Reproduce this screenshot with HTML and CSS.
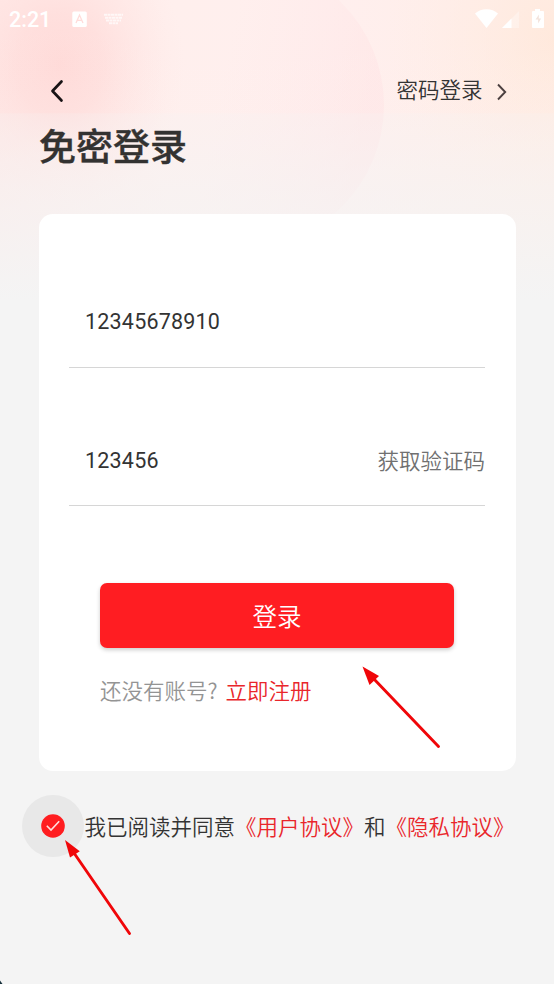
FILE: index.html
```html
<!DOCTYPE html>
<html lang="zh-CN">
<head>
<meta charset="utf-8">
<title>免密登录</title>
<link rel="stylesheet" href="styles.css">
</head>
<body>
<div class="screen">
  <svg class="backdrop" viewBox="0 0 554 300" aria-hidden="true">
    <defs>
      <linearGradient id="base" x1="0" y1="0" x2="1" y2="0">
        <stop offset="0" stop-color="#ffe8e6"/><stop offset=".3" stop-color="#ffefed"/><stop offset=".6" stop-color="#ffefee"/><stop offset="1" stop-color="#ffede6"/>
      </linearGradient>
      <radialGradient id="rose"><stop offset="0" stop-color="#ffdad8"/><stop offset=".35" stop-color="#ffdcda" stop-opacity=".75"/><stop offset="1" stop-color="#ffe8e6" stop-opacity="0"/></radialGradient>
      <radialGradient id="peach"><stop offset="0" stop-color="#ffe9dc"/><stop offset="1" stop-color="#ffeee8" stop-opacity="0"/></radialGradient>
      <linearGradient id="bubble" x1="0" y1="0" x2="1" y2=".2"><stop offset=".5" stop-color="#ffe8e8" stop-opacity="0"/><stop offset="1" stop-color="#ffe3e4" stop-opacity=".5"/></linearGradient>
      <linearGradient id="fade" x1="0" y1="0" x2="0" y2="1"><stop offset="0" stop-color="#f4f4f4" stop-opacity="0"/><stop offset=".375" stop-color="#f4f4f4" stop-opacity=".05"/><stop offset=".38" stop-color="#f4f4f4" stop-opacity=".25"/><stop offset=".65" stop-color="#f4f4f4" stop-opacity=".6"/><stop offset="1" stop-color="#f4f4f4"/></linearGradient>
    </defs>
    <rect width="554" height="300" fill="url(#base)"/>
    <ellipse cx="60" cy="65" rx="125" ry="145" fill="url(#rose)"/>
    <circle cx="554" cy="40" r="170" fill="url(#peach)"/>
    <circle cx="240" cy="105" r="144" fill="url(#bubble)"/>
    <rect width="554" height="300" fill="url(#fade)"/>
  </svg>

  <div class="status">
    <span class="clock">2:21</span>
    <svg class="status-input" width="54" height="18" viewBox="0 0 54 18">
      <rect x="1.300" y="1.500" width="14.500" height="15.500" rx="1.500" fill="#fff"/>
      <path d="M5 13 8.500 5l3.500 8M6.500 10.300h4" fill="none" stroke="#ffdcda" stroke-width="1.300"/>
      <path d="M33 4.800h19M34 7.700h17M35 10.600h15M38 13.300h9" stroke="#fff" stroke-opacity=".7" stroke-width="2" stroke-dasharray="3 .5"/>
    </svg>
    <svg class="status-signal" width="70" height="20" viewBox="0 0 70 20">
      <path d="M0 4.500C6-1.200 17-1.200 23 4.500L11.500 19z" fill="#fff"/>
      <path d="M27 19 44 2v17z" fill="#fff" fill-opacity=".3"/><path d="M27 19 36.500 9.500V19z" fill="#fff"/>
      <path d="M57 3q0-1 1-1h2V0h5v2h3q1 0 1 1v15q0 1-1 1H58q-1 0-1-1z" fill="#fff"/><path d="M64 5.500 60.500 10.500h2.600v4l3-5h-2.400z" fill="#f3e3dc"/>
    </svg>
  </div>

  <header class="bar">
    <svg class="back" width="16" height="24" viewBox="0 0 16 24"><path d="M12.500 2.500 3.500 12l9 9.500" fill="none" stroke="#181315" stroke-width="2.700" stroke-linecap="round" stroke-linejoin="round"/></svg>
    <a class="switch">密码登录<svg width="12" height="18" viewBox="0 0 12 18"><path d="m2 1.500 7.200 7.500L2 16.500" fill="none" stroke="#4b4040" stroke-width="1.900"/></svg></a>
  </header>

  <h1 class="title">免密登录</h1>

  <main class="card">
    <div class="field phone"><span>12345678910</span></div>
    <div class="field code"><span>123456</span><a class="send">获取验证码</a></div>
    <button class="submit">登录</button>
    <p class="register"><span>还没有账号?</span><a>立即注册</a></p>
  </main>

  <div class="agreement">
    <span class="check"><svg width="24" height="24" viewBox="0 0 24 24"><circle cx="12" cy="12" r="11.800" fill="#ff1d20"/><path d="m5.800 11.700 4.200 4.300 8.200-8.800" fill="none" stroke="#ffe0df" stroke-width="1.600"/></svg></span>
    <p>我已阅读并同意<a>《用户协议》</a>和<a>《隐私协议》</a></p>
  </div>

  <svg class="arrows" viewBox="0 0 554 984" aria-hidden="true">
    <g stroke="#f00609" stroke-width="2.900" stroke-linecap="round"><path d="M438.500 746.500 373 678"/><path d="M129.500 933.500 74 853"/></g>
    <g fill="#f00609"><path d="m362.500 666.500 16.500 9.500-9.500 9z"/><path d="m65 840 14.800 11.200-9.800 6.300z"/></g>
    <path d="M0 980.500 2.500 984H0z" fill="#17303b"/>
  </svg>
</div>
</body>
</html>
```
FILE: styles.css
```css
* { box-sizing: border-box; }
body { margin: 0; background: #f4f4f4; }
.screen {
  position: relative;
  isolation: isolate;
  height: 984px;
  overflow: hidden;
  color: #333;
  font: 350 21.5px/32px "Noto Sans CJK SC", sans-serif;
}
.backdrop { position: absolute; z-index: -1; top: 0; left: 0; width: 554px; height: 300px; }
.status { display: flex; align-items: center; height: 38px; padding: 0 9px; color: #fff; }
.clock { width: 62px; padding-top: 1px; font: 500 21.5px/32px Roboto, sans-serif; }
.status-signal { margin-left: auto; }
.bar { display: flex; align-items: center; justify-content: space-between; height: 75px; padding: 0 46px 0 49px; }
.back { margin-top: 31px; }
.switch { display: flex; align-items: center; gap: 13.5px; margin-top: 26px; }
.switch svg { margin-top: 7px; }
.title { margin: 6px 0 0 39px; font-size: 37px; line-height: 52px; font-weight: 500; -webkit-text-stroke: .4px #333231; color: #333231; }
.card {
  width: 477px;
  height: 557px;
  margin: 43px 0 0 38.5px;
  padding: 58px 30.5px 0;
  border-radius: 14px;
  background: #fff;
}
.field { display: flex; align-items: center; justify-content: space-between; border-bottom: 1px solid #d6d6d6; padding-left: 16px; }
.field span { font-family: Roboto, sans-serif; font-weight: 400; letter-spacing: .2px; }
.phone { height: 96px; padding-top: 5px; }
.code { height: 138px; padding-top: 48px; }
.send { margin-top: -2px; color: #707070; }
.submit {
  display: block;
  width: 354px;
  height: 65px;
  margin: 77px auto 0;
  padding: 0;
  border: 0;
  border-radius: 7px;
  background: #ff1d22;
  box-shadow: 0 2px 4px #0003;
  color: #fff;
  font: 350 24.5px/36px "Noto Sans CJK SC", sans-serif;
}
.register { display: flex; gap: 8px; margin: 26px 0 0 31px; color: #949494; }
.register a, .agreement a { color: #e9262b; }
.agreement { display: flex; align-items: center; height: 62px; margin: 24px 0 0 21.5px; }
.agreement p { margin: 0 0 0 1px; white-space: nowrap; }
.check { display: grid; place-items: center; width: 62px; height: 62px; border-radius: 50%; background: #e8e8e8; }
.arrows { position: absolute; top: 0; left: 0; width: 554px; height: 984px; pointer-events: none; }
```
